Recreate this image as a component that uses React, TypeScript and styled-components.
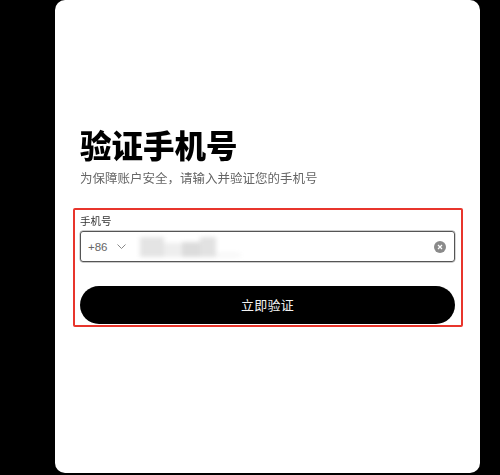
import React from "react";
import styled, { createGlobalStyle } from "styled-components";

const Global = createGlobalStyle`
  html, body { margin: 0; padding: 0; background: #000; }
  body { width: 500px; height: 475px; overflow: hidden; font-family: "Noto Sans CJK SC", "Liberation Sans", sans-serif; }
`;

const Page = styled.div`
  width: 500px;
  height: 475px;
  background: #000;
  padding-left: 55px;
  box-sizing: border-box;
`;

const Card = styled.div`
  width: 425px;
  height: 473px;
  background: #fff;
  border-radius: 10px;
  box-sizing: border-box;
  padding: 121px 18px 0;
  display: flex;
  flex-direction: column;
`;

const Title = styled.h1`
  margin: 0 0 0 7px;
  font-size: 31.5px;
  line-height: 46px;
  font-weight: 900;
  color: #000;
  filter: blur(0.3px);
`;

const Subtitle = styled.p`
  margin: 2px 0 0 7px;
  font-size: 12.5px;
  line-height: 18px;
  color: #666;
  filter: blur(0.3px);
`;

const Highlight = styled.div`
  margin-top: 21px;
  width: 390px;
  height: 119px;
  box-sizing: border-box;
  border: 2px solid #e8352c;
  border-radius: 2px;
  padding: 3px 6px 0 5px;
  display: flex;
  flex-direction: column;
`;

const Label = styled.label`
  font-size: 10.5px;
  line-height: 15px;
  color: #333;
  filter: blur(0.3px);
`;

const InputBox = styled.div`
  margin-top: 3px;
  height: 31px;
  box-sizing: border-box;
  border: 1px solid #555;
  box-shadow: 0 0 0.6px 0.4px rgba(0, 0, 0, 0.4);
  border-radius: 3px;
  display: flex;
  align-items: center;
  padding: 0 8px 0 7px;
`;

const Code = styled.span`
  font-size: 11.5px;
  color: #666;
  font-family: "Liberation Sans", sans-serif;
`;

const Chevron = styled.svg`
  width: 9px;
  height: 5px;
  margin-left: 9px;
  color: #888;
`;

const Masked = styled.div`
  margin-left: 14px;
  width: 100px;
  height: 20px;
  display: flex;
  align-items: stretch;
  filter: blur(2px);
`;

const MaskBlock = styled.span<{ $w: number; $c: string; $top: number }>`
  width: ${(p) => p.$w}px;
  margin-top: ${(p) => p.$top}px;
  background: ${(p) => p.$c};
`;

const Clear = styled.button`
  margin-left: auto;
  width: 12px;
  height: 12px;
  padding: 0;
  border: 0;
  border-radius: 50%;
  background: #8a8a8a;
  color: #fff;
  display: flex;
  align-items: center;
  justify-content: center;
`;

const Submit = styled.button`
  margin-top: 24px;
  height: 38px;
  border: 0;
  border-radius: 19px;
  background: #000;
  color: #f2f2f2;
  font-family: inherit;
  font-size: 13px;
  letter-spacing: 0.3px;
  padding: 0 0 2px;
`;

export default function App() {
  return (
    <>
      <Global />
      <Page>
        <Card>
          <Title>验证手机号</Title>
          <Subtitle>为保障账户安全，请输入并验证您的手机号</Subtitle>
          <Highlight>
            <Label>手机号</Label>
            <InputBox>
              <Code>+86</Code>
              <Chevron viewBox="0 0 9 5" fill="none" stroke="currentColor" strokeWidth="1">
                <path d="M0.5 0.5 L4.5 4.5 L8.5 0.5" />
              </Chevron>
              <Masked>
                <MaskBlock $w={24} $c="#e4e4e4" $top={0} />
                <MaskBlock $w={18} $c="#eeeeee" $top={6} />
                <MaskBlock $w={18} $c="#dcdcdc" $top={5} />
                <MaskBlock $w={16} $c="#e2e2e2" $top={0} />
                <MaskBlock $w={24} $c="#f6f6f6" $top={16} />
              </Masked>
              <Clear aria-label="清除">
                <svg width="6" height="6" viewBox="0 0 6 6" stroke="currentColor" strokeWidth="1.2">
                  <path d="M1 1 L5 5 M5 1 L1 5" />
                </svg>
              </Clear>
            </InputBox>
            <Submit>立即验证</Submit>
          </Highlight>
        </Card>
      </Page>
    </>
  );
}
